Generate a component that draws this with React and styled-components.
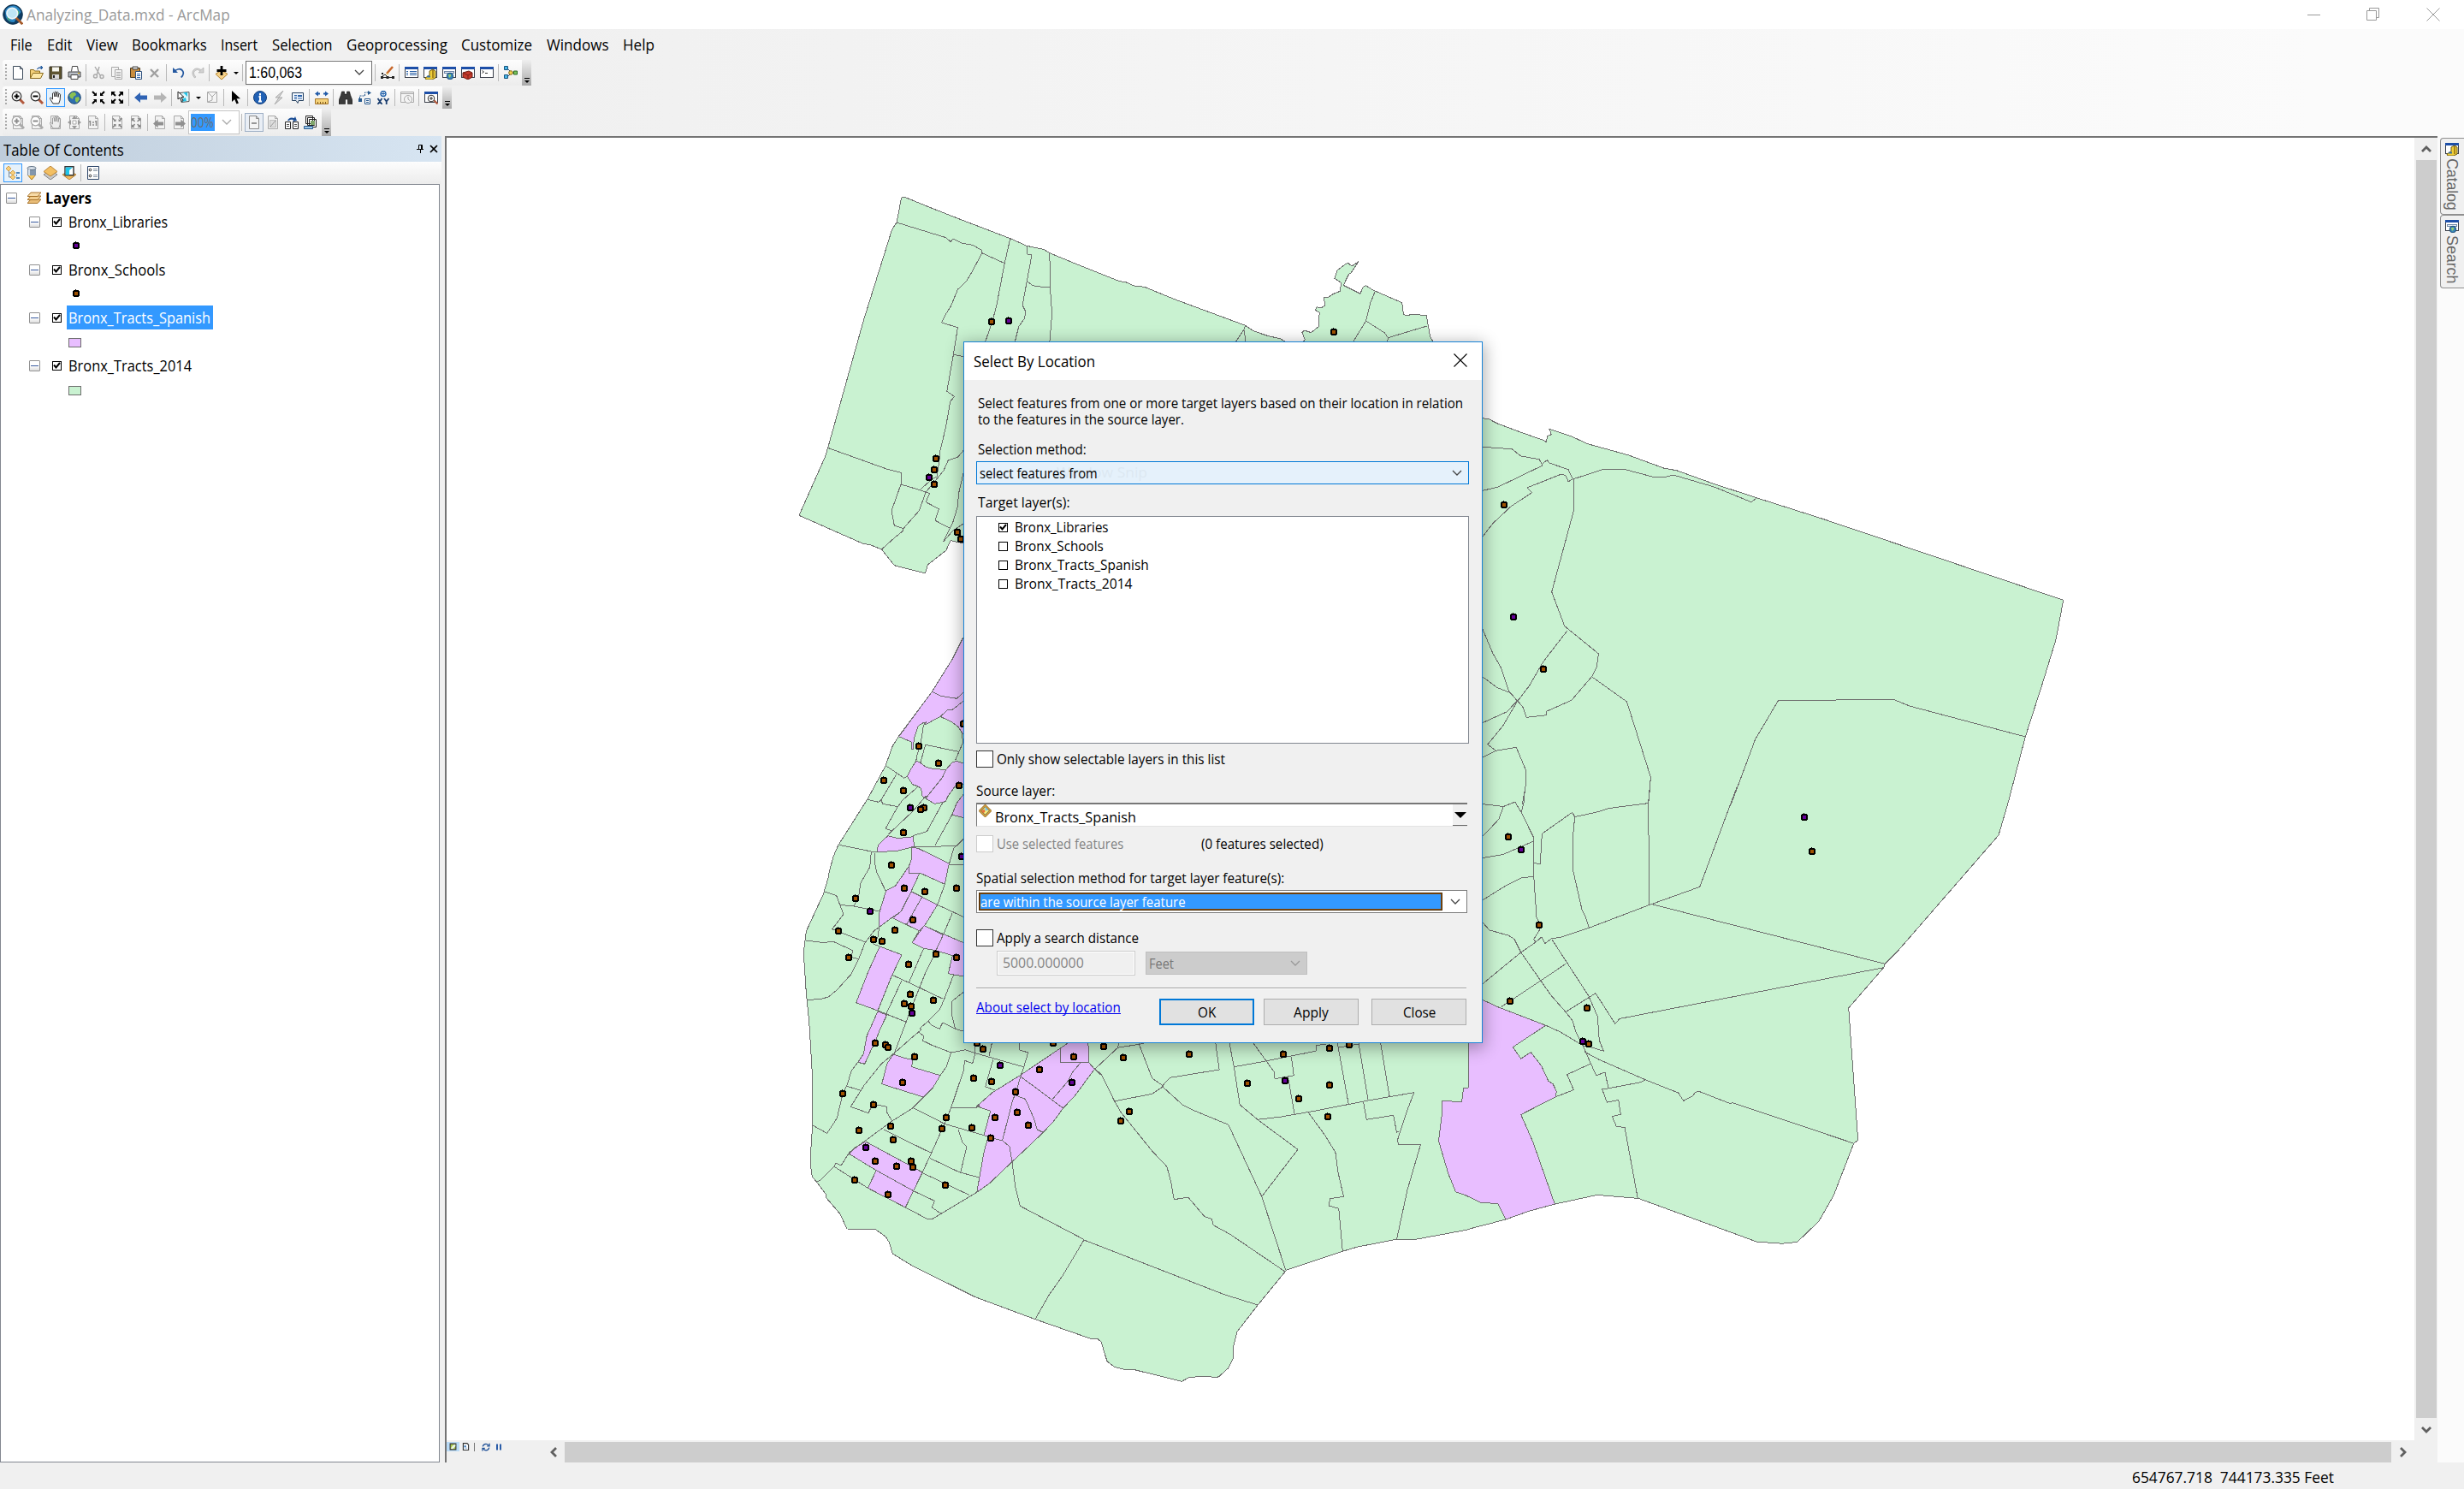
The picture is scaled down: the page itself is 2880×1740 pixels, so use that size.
import React, { useLayoutEffect, useRef, useState } from "react";
import styled, { createGlobalStyle, css } from "styled-components";

const GlobalStyle = createGlobalStyle`
  * { box-sizing: border-box; }
  body { margin: 0; background: #fff; overflow: hidden; }
`;

const UI = `"Open Sans", "Noto Sans", sans-serif`;
const ARIAL = `"Liberation Sans", Arial, sans-serif`;

/* ---------- text fitted to the metrics of the native control ---------- */

const FitBox = styled.span`
  display: block;
  flex: none;
  width: ${(p) => p.$w}px;
  height: ${(p) => p.$lh}px;
  line-height: ${(p) => p.$lh}px;
  font-family: ${(p) => (p.$arial ? ARIAL : UI)};
  font-size: ${(p) => p.$size}px;
  font-weight: ${(p) => (p.$bold ? 700 : 400)};
  color: ${(p) => p.$color};
  white-space: pre;
`;
const FitInner = styled.span`
  display: inline-block;
  transform-origin: 0 50%;
`;

function Fit({ w, size = 16, lh = 20, color = "#000", bold, arial, children }) {
  const ref = useRef(null);
  const [k, setK] = useState(1);
  useLayoutEffect(() => {
    if (ref.current) setK(w / ref.current.offsetWidth);
  }, [w, children]);
  return (
    <FitBox $w={w} $size={size} $lh={lh} $color={color} $bold={bold} $arial={arial}>
      <FitInner ref={ref} style={{ transform: `scaleX(${k})` }}>
        {children}
      </FitInner>
    </FitBox>
  );
}

/* ---------- icons, all drawn on a 16 x 16 grid ---------- */

const G = "#a9a9a9";
const page = (c = "#3c4a5a", f = "#fff") => (
  <path d="M2.5 .5h8l3 3v12h-11zM10.5 .5v3h3" fill={f} stroke={c} />
);
const windowFrame = (
  <>
    <rect x=".5" y="1.5" width="15" height="12" fill="#fff" stroke="#3a3f4a" />
    <rect x="0" y="1" width="16" height="3" fill="#1d4fa8" />
  </>
);
const inArrows = (c) => (
  <g fill={c} stroke={c}>
    <path d="M1 1l4 4M15 1l-4 4M1 15l4-4M15 15l-4-4" strokeWidth="2" />
    <path d="M6 2v4H2zM10 2v4h4zM6 14v-4H2zM10 14v-4h4z" stroke="none" />
  </g>
);
const outArrows = (c) => (
  <g fill={c} stroke={c}>
    <path d="M2 2l4 4M14 2l-4 4M2 14l4-4M14 14l-4-4" strokeWidth="2" />
    <path d="M1 1h5l-5 5zM15 1h-5l5 5zM1 15h5l-5-5zM15 15h-5l5-5z" stroke="none" />
  </g>
);
const hand = (c, f = "#fff") => (
  <path
    d="M5 15L1.5 9.5Q1 8 2.5 8.2L4.5 10V3q1-1.6 1.8 0l.6 4V1.8q1-1.6 1.8 0V7l.6-5q1.2-1.2 1.8.3L11 7.5l.8-3.6q1.3-1 1.8.5l-.5 6.6-1.4 4z"
    fill={f}
    stroke={c}
  />
);
const magnifier = (sign, c, rim, handle) => (
  <>
    <path d="M10 10l5 5" stroke={handle} strokeWidth="3" />
    <circle cx="6.5" cy="6.5" r="5.3" fill="#fff" stroke={rim} strokeWidth="1.2" />
    <path d={sign === "+" ? "M3.5 6.5h6M6.5 3.5v6" : "M3.5 6.5h6"} stroke={c} strokeWidth="2" />
  </>
);
const globe = (
  <>
    <circle cx="8" cy="8" r="7.3" fill="#2f6fae" stroke="#1d456f" />
    <path d="M5 2l4 0 1 3-3 2-1 3-3-2-1-3zM9 8l4-1 1 3-3 4-2-2z" fill="#8cc152" />
  </>
);
const bigArrow = (c, left) => (
  <path d={left ? "M0 8l7-6v3.5h8v5H7V14z" : "M16 8l-7-6v3.5H1v5h8V14z"} fill={c} />
);

const ICONS = {
  new: page(),
  open: (
    <>
      <path d="M.5 14.5v-10h4l1 1.5h6v8z" fill="#f5d27a" stroke="#8a6a1c" />
      <path d="M.5 14.5l3-6h12l-3 6z" fill="#fde9a8" stroke="#8a6a1c" />
      <path d="M8 4q2-3 5-2M13 0v4l2-2z" fill="#2d62a3" stroke="#2d62a3" />
    </>
  ),
  save: (
    <>
      <path d="M1 1h14v14H1z" fill="#5e5530" stroke="#2d2a20" />
      <path d="M4 1.500h8v5H4z" fill="#f7f7f0" />
      <path d="M4 10h8v5H4z" fill="#d8d8d8" />
      <path d="M5 11h2v3H5z" fill="#222" />
    </>
  ),
  print: (
    <>
      <path d="M4.500 6.500l1-6h6l1 6" fill="#fff" stroke="#444" />
      <path d="M1 7h14v6H1z" fill="#b9bec6" stroke="#444" />
      <path d="M4 10.500h8v5H4z" fill="#fff" stroke="#444" />
      <path d="M12 8.500h2" stroke="#e6b800" />
    </>
  ),
  cut: (
    <g fill="none" stroke={G} strokeWidth="1.4">
      <path d="M4 1l6 10M9 1L6 11" />
      <circle cx="4.500" cy="12" r="2" />
      <circle cx="12" cy="12.500" r="2" />
    </g>
  ),
  copy: (
    <g fill="#f4f4f4" stroke={G}>
      <path d="M1.500 1.500h8v11h-8z" />
      <path d="M5.500 4.500h8v11h-8zM7 7.500h5M7 9.500h5M7 11.500h5M7 13.500h5" />
    </g>
  ),
  paste: (
    <>
      <path d="M1.500 2.500h11v11h-11z" fill="#c98d3f" stroke="#4b3a20" />
      <path d="M4 1h6v3H4z" fill="#ddd" stroke="#444" />
      <path d="M7.500 6.500h7v9h-7z" fill="#fff" stroke="#2c4f7c" />
      <path d="M9 9.500h4M9 11.500h4M9 13.500h4" stroke="#2c62a8" />
    </>
  ),
  del: <path d="M3 4l9 9M12 4l-9 9" stroke="#a0a0a0" strokeWidth="2.400" />,
  undo: <path d="M1 2v6h6L4.800 5.800Q9 3 11.500 6T10 13l1.500 1Q16 9 13 5T4 4.500z" fill="#2458a0" />,
  redo: <path d="M15 2v6H9l2.200-2.200Q7 3 4.500 6T6 13l-1.500 1Q0 9 3 5T12 4.500z" fill="#d2d2d2" stroke={G} strokeWidth=".6" />,
  addData: (
    <>
      <path d="M8 16L1 9.500 8 5l7 4.500z" fill="#f6d28a" stroke="#b5832c" />
      <path d="M8 0v11M2.500 5.500h11" stroke="#000" strokeWidth="2.800" />
    </>
  ),
  editor: (
    <>
      <path d="M1.500 13.500h13M2 12l3-2 3 3" stroke="#222" fill="none" />
      <path d="M0 12h3v3H0zM6.500 12h3v3h-3zM13 12h3v3h-3zM1 8h2v2H1z" fill="#222" />
      <path d="M7 9l7-8" stroke="#c8672a" strokeWidth="2.600" />
      <path d="M6 11l2-3 1.500 1.500z" fill="#f2cf6b" />
    </>
  ),
  toc: (
    <>
      {windowFrame}
      <path d="M2 6.500h2M2 8.500h2M2 10.500h2M6 6.500h8M6 8.500h8M6 10.500h8" stroke="#2c62a8" />
    </>
  ),
  catalog: (
    <>
      {windowFrame}
      <path d="M7 6l4-2 3 2v8l-4 2H3l-1-2 5-3z" fill="#f0cf3a" stroke="#6d5a10" />
      <path d="M11 5v9" stroke="#a8861a" strokeWidth="2" />
      <path d="M4 12.500h4" stroke="#3a6f9e" strokeWidth="2" />
    </>
  ),
  search: (
    <>
      {windowFrame}
      <rect x="2.500" y="6.500" width="11" height="2" fill="#e8eef6" stroke="#6f88a8" />
      <circle cx="9" cy="12" r="3.800" fill="#3a86b8" stroke="#1d4f7a" />
      <path d="M7 10l3 0 0 2-2 2z" fill="#9bd06a" />
    </>
  ),
  toolbox: (
    <>
      {windowFrame}
      <path d="M2 8l7-2 4 2v5l-5 3-6-3z" fill="#c4392b" stroke="#6e1a12" />
      <path d="M2 8l6 3 5-3M8 11v5" stroke="#7e1f16" fill="none" />
    </>
  ),
  python: (
    <>
      {windowFrame}
      <path d="M2.500 5.500l2 1.500-2 1.500M6 8.500h3" stroke="#333" fill="none" />
    </>
  ),
  model: (
    <>
      <path d="M4 3l5 5-5 5M9 8h3" stroke="#2b4f7a" fill="none" />
      <path d="M.5 .5h4v4h-4zM.5 10.500h4v4h-4z" fill="#49b4e8" stroke="#16557c" />
      <circle cx="8" cy="8" r="2.300" fill="#f6d34c" stroke="#85681a" />
      <path d="M11.500 6h4v4h-4z" fill="#7cc35c" stroke="#2c6b25" />
    </>
  ),
  zoomIn: magnifier("+", "#000", "#333", "#b2593d"),
  zoomOut: magnifier("-", "#000", "#333", "#b2593d"),
  pan: hand("#333"),
  globe,
  fixIn: inArrows("#000"),
  fixOut: outArrows("#000"),
  back: bigArrow("#2f63b4", true),
  fwd: bigArrow("#b5b5b5", false),
  selectFeat: (
    <>
      <path d="M3 2.500l11-1v11l-9 1z" fill="#dff6fa" stroke="#555" />
      <path d="M7 2l5 5V2zM5 10l5-2 1 4-6 1z" fill="#27c3e6" />
      <path d="M1 1v9l2.300-2 2 4.500 1.700-.8-2-4.200h3z" fill="#fff" stroke="#222" />
    </>
  ),
  clearSel: <path d="M2.500 1.500h11v12h-11zM3 2l5 5M13 2L8 7v4M3 13l5-2" fill="#f4f4f4" stroke={G} />,
  pointer: <path d="M3 0v13l3.200-3 2.300 5.500 2.400-1-2.300-5.300H13z" fill="#000" />,
  identify: (
    <>
      <circle cx="8" cy="8" r="7.500" fill="#2161b5" stroke="#133e7a" />
      <path d="M8 3v2.400M6.500 7H8v5M6 12.500h4" stroke="#fff" strokeWidth="2" fill="none" />
    </>
  ),
  bolt: <path d="M13 0L4 8h4l-5 8 9-8H8z" fill="#d8d8d8" stroke={G} />,
  popup: (
    <>
      <path d="M1.500 2.500h13v9H9l-1 3-2-3H1.500z" fill="#eef4fb" stroke="#27415f" />
      <path d="M4 5.500h3M4 7.500h3M4 9.500h3" stroke="#2c62a8" />
      <path d="M8 5h5v2H8zM8 8.500h5v1H8z" fill="#2c62a8" />
    </>
  ),
  measure: (
    <>
      <path d="M0 3.500l4-3v2h2v2H4v2zM16 3.500l-4-3v2h-2v2h2v2z" fill="#215aa8" />
      <path d="M.5 9.500h15v6H.5z" fill="#f5d27a" stroke="#a5762a" />
      <path d="M3.500 13v2M6.500 13v2M9.500 13v2M12.500 13v2" stroke="#7a5519" />
    </>
  ),
  find: (
    <path
      d="M3.500 1h3v3h3V1h3l1 4 2.500 6.500v4h-5.500V10h-3v5.500H0v-4L2.500 5z"
      fill="#3a3a3a"
      stroke="#111"
      strokeWidth=".6"
    />
  ),
  route: (
    <>
      <path d="M8.500 9.500h6v6h-6zM10 11.500h3M10 13.500h3" fill="#fff" stroke="#27598e" />
      <path d="M2.500 9V6h6V2h4" stroke="#27598e" fill="none" strokeDasharray="2 1" />
      <path d="M12 0l4 2.500L12 5zM1 9h4v4H1z" fill="#27598e" />
    </>
  ),
  gotoXY: (
    <>
      <circle cx="8" cy="3.500" r="3" fill="#fff" stroke="#1f5fa8" strokeWidth="1.400" />
      <path d="M8 1.500v4M6 3.500h4" stroke="#1f5fa8" />
      <path d="M1.500 9l5 7M6.500 9l-5 7M9 9l2.700 3.500L14.500 9M11.700 12v4" stroke="#1c3f70" strokeWidth="1.800" fill="none" />
    </>
  ),
  time: (
    <g fill="#f4f4f4" stroke={G}>
      <path d="M.5 1.500h15v12H.5zM.5 3.500h15" />
      <circle cx="9" cy="10" r="4.500" />
      <path d="M9 7v3l2 1.500" />
    </g>
  ),
  viewer: (
    <>
      {windowFrame}
      <path d="M11 11l4.500 4.500" stroke="#b2593d" strokeWidth="2.200" />
      <circle cx="8" cy="9" r="3.800" fill="#fff" stroke="#333" />
      <path d="M6 9h4M8 7v4" stroke="#333" />
    </>
  ),
  lZoomIn: (
    <>
      {page(G, "#f2f2f2")}
      {magnifier("+", "#8c8c8c", G, G)}
    </>
  ),
  lZoomOut: (
    <>
      {page(G, "#f2f2f2")}
      {magnifier("-", "#8c8c8c", G, G)}
    </>
  ),
  lPan: (
    <>
      {page(G, "#f2f2f2")}
      {hand("#999", "#ededed")}
    </>
  ),
  lFull: (
    <>
      {page(G, "#f2f2f2")}
      <path d="M8 0l3 4H5zM8 16l3-4H5zM0 8l4-3v6zM16 8l-4-3v6z" fill="#9a9a9a" />
      <path d="M6 6h4v4H6z" fill="#fff" stroke={G} />
    </>
  ),
  l11: (
    <>
      {page(G, "#f2f2f2")}
      <path d="M4.500 6v6M11.500 6v6M8 7v2M8 10v2M3 7h2M10 7h2" stroke="#8c8c8c" strokeWidth="1.500" />
    </>
  ),
  lIn: (
    <>
      {page(G, "#f2f2f2")}
      <g transform="translate(2 2.500) scale(.76)">{inArrows("#858585")}</g>
    </>
  ),
  lOut: (
    <>
      {page(G, "#f2f2f2")}
      <g transform="translate(2 2.500) scale(.76)">{outArrows("#858585")}</g>
    </>
  ),
  lBack: (
    <>
      {page(G, "#f2f2f2")}
      <g transform="translate(0 3) scale(.8)">{bigArrow("#909090", true)}</g>
    </>
  ),
  lFwd: (
    <>
      {page(G, "#f2f2f2")}
      <g transform="translate(3.200 3) scale(.8)">{bigArrow("#909090", false)}</g>
    </>
  ),
  draft: (
    <>
      {page("#8c8c8c", "#f4f4f4")}
      <path d="M5 9h6" stroke="#777" strokeWidth="1.500" />
    </>
  ),
  focus: (
    <>
      {page(G, "#f2f2f2")}
      <path d="M4.500 5.500h7v8h-7z" fill="#ddd" stroke="#999" strokeDasharray="1 1" />
      <path d="M5 13l6-7" stroke="#999" />
    </>
  ),
  layout: (
    <>
      <path d="M.5 7.500h6v8h-6zM9.500 7.500h6v8h-6z" fill="#fff" stroke="#222" />
      <path d="M2 10.500h3M2 12.500h3M11 10.500h3M11 12.500h3" stroke="#555" />
      <path d="M3 6Q5 1 11 3l1-2 2 5-5 1 1-2Q6 4 5 6z" fill="#1c4f96" />
    </>
  ),
  driven: (
    <>
      <path d="M2.500 .5h8v9h-8zM4.500 2.500h8v9h-8zM6.500 4.500h8v9h-8z" fill="#fff" stroke="#222" />
      <path d="M8 6h5v5H8z" fill="#7fa46a" />
      <path d="M.5 12.500h10v3H.5z" fill="#9cc7e8" stroke="#27598e" />
    </>
  ),
  listOrder: (
    <>
      <path d="M3.500 3v10h4M3.500 8h4" stroke="#7d8b98" fill="none" />
      <path d="M3 0l3 3-3 3-3-3zM8 5l3 3-3 3-3-3zM8 10l3 3-3 3-3-3z" fill="#f7cf7c" stroke="#c99238" strokeWidth=".8" />
      <path d="M12 8h4M12 14h4M12 11h1" stroke="#1f64a8" strokeWidth="1.600" />
    </>
  ),
  listSource: (
    <>
      <path d="M3 10h10l-5 6z" fill="#f7c65a" stroke="#a87a24" />
      <path d="M3 2h10v9H3z" fill="#8296ac" />
      <ellipse cx="8" cy="2.500" rx="5" ry="2" fill="#dbe3ec" stroke="#5d6f82" />
      <path d="M5 4v7" stroke="#d3dde8" strokeWidth="2" />
    </>
  ),
  listVis: (
    <>
      <path d="M8 16L0 10l8-5 8 5z" fill="#c9c9c9" stroke="#808080" />
      <path d="M8 12L0 6.500 8 0l8 6.500z" fill="#f3bf62" stroke="#b8843a" />
    </>
  ),
  listSel: (
    <>
      <path d="M0 10l8 6 8-6-4-2H4z" fill="#f3b95a" stroke="#b8843a" />
      <path d="M3 .8h10v10H3z" fill="#fff" stroke="#333" strokeWidth="1.400" />
      <path d="M3.700 1.500H12L8 5v5.500H3.700z" fill="#1fc6ea" />
    </>
  ),
  options: (
    <>
      <path d="M1.500 .5h13v15h-13z" fill="#fff" stroke="#2b4468" />
      <path d="M8 3.500h5M8 5.500h5M8 10.500h5M8 12.500h5" stroke="#8a96a5" />
      <circle cx="4.500" cy="4.500" r="1.300" fill="none" stroke="#222" />
      <circle cx="4.500" cy="11.500" r="1.300" fill="none" stroke="#222" />
    </>
  ),
  layers: (
    <>
      <path d="M0 14.500l4-4.500h12l-4 4.500z" fill="#e9bd78" stroke="#a8732a" />
      <path d="M0 10.500L4 6h12l-4 4.500z" fill="#f2cd8e" stroke="#a8732a" />
      <path d="M0 6.500L4 2h12l-4 4.500z" fill="#f7dba8" stroke="#a8732a" />
    </>
  ),
  polygonLayer: (
    <>
      <path d="M8 0l8 8-8 8-8-8z" fill="#d9a23c" stroke="#8a6420" />
      <path d="M8 3l5 5-5 5-5-5z" fill="#f5ee7c" stroke="#444" strokeWidth=".8" />
      <path d="M8 3l4 4-4 1z" fill="#78c4f0" />
      <path d="M3 8l4-2 1 3-2 2z" fill="#e8703a" />
    </>
  ),
  arcmap: (
    <>
      <circle cx="8" cy="8" r="7.600" fill="#0f3d63" stroke="#0a2a44" strokeWidth=".5" />
      <path d="M2 5q2-4 7-4 4 1 5.500 5L12 9 9 14q-5 0-6.500-4z" fill="#2a86c4" />
      <path d="M10 3l3 3-1 3-2 1zM3 10l2 1 1 3z" fill="#4fae58" />
      <path d="M10 10l5.500 5.500" stroke="#a55a2a" strokeWidth="1.800" />
      <circle cx="7.500" cy="7" r="4.200" fill="#bfe6f5" stroke="#eef5f8" strokeWidth="1.100" />
    </>
  ),
  dataView: (
    <>
      <path d="M2 2h12v12H2z" fill="#a9c94a" stroke="#333" strokeWidth="2" />
      <path d="M3 12l5-7 5-2v4l-5 6z" fill="#e7f3e2" />
    </>
  ),
  layoutView: (
    <>
      <path d="M2.500 1h8l3 3v11h-11z" fill="#fff" stroke="#333" strokeWidth="2" />
      <path d="M5 6h3v3H5zM5 11h6" fill="#3a78b8" stroke="#3a78b8" />
    </>
  ),
  refresh: (
    <path d="M2 7q1-5 6-5 3 0 4.500 2.500M14 9q-1 5-6 5-3 0-4.500-2.500M14.500 1v5H10M1.500 15v-5H6" stroke="#1d4f96" strokeWidth="2" fill="none" />
  ),
  pause: <path d="M2 1h4v14H2zM10 1h4v14h-4z" fill="#2a5ca8" />,
};

const IconSvg = styled.svg`
  display: block;
  flex: none;
`;
const Icon = ({ name, size = 16 }) => (
  <IconSvg width={size} height={size} viewBox="0 0 16 16" fill="none">
    {ICONS[name]}
  </IconSvg>
);
const Chevron = ({ color = "#444", w = 12 }) => (
  <IconSvg width={w} height={w / 2 + 2} viewBox="0 0 12 8">
    <path d="M1 1l5 5 5-5" fill="none" stroke={color} strokeWidth="1.300" />
  </IconSvg>
);

/* ---------- window shell ---------- */

const Window = styled.div`
  position: relative;
  width: 2880px;
  height: 1740px;
  display: flex;
  flex-direction: column;
  background: linear-gradient(90deg, #f0f0f0 0, #f0f0f0 600px, #fbfbfb 2700px);
  overflow: hidden;
`;
const TitleBar = styled.header`
  height: 34px;
  flex: none;
  display: flex;
  align-items: center;
  background: #fff;
  padding: 0 28px 0 3px;
  gap: 4px;
`;
const WindowButtons = styled.div`
  margin-left: auto;
  padding-bottom: 1px;
  display: flex;
  gap: 54px;
  align-items: center;
`;
const MenuBar = styled.nav`
  height: 36px;
  flex: none;
  display: flex;
  align-items: center;
  gap: 16.500px;
  padding: 0 0 0 12px;
`;
const ToolbarStack = styled.div`
  height: 89px;
  flex: none;
  display: flex;
  flex-direction: column;
  align-items: flex-start;
`;
const Toolbar = styled.div`
  margin-left: 3px;
  margin-bottom: ${(p) => p.$mb ?? 0}px;
  height: ${(p) => p.$h}px;
  display: flex;
  align-items: center;
  background: linear-gradient(#fdfdfd, #ececec);
  border-radius: 3px;
`;
const Grip = styled.div`
  width: 2px;
  height: 20px;
  margin: 0 2px 0 3px;
  background: repeating-linear-gradient(#a8a8a8 0 2px, transparent 2px 4px);
`;
const ToolButton = styled.div`
  width: 22px;
  height: 22px;
  flex: none;
  display: flex;
  align-items: center;
  justify-content: center;
  ${(p) =>
    p.$on &&
    css`
      background: ${p.$on === "grey" ? "#e9eef5" : "#e5f1fb"};
      border: 1px solid ${p.$on === "grey" ? "#9fb0c6" : "#3399ff"};
    `}
`;
const Sep = styled.div`
  width: 1px;
  height: 20px;
  flex: none;
  margin: 0 3px 0 2px;
  background: #b9b9b9;
`;
const Caret = styled.div`
  width: 11px;
  display: flex;
  justify-content: center;
  &::after {
    content: "";
    border: 3px solid transparent;
    border-top: 3px solid #000;
    border-bottom: 0;
  }
`;
const ScaleCombo = styled.div`
  width: 148px;
  height: 28px;
  display: flex;
  align-items: center;
  justify-content: space-between;
  padding: 0 8px 0 3px;
  margin: 0 1px 0 0;
  background: #fff;
  border: 1px solid #707070;
`;
const PercentCombo = styled.div`
  width: 60px;
  height: 28px;
  display: flex;
  align-items: center;
  justify-content: space-between;
  padding: 0 8px 0 2px;
  background: #fff;
  border: 1px solid #c6c6c6;
`;
const PercentValue = styled.div`
  width: 28px;
  height: 20px;
  display: flex;
  background: #3399ff;
`;
const Overflow = styled.div`
  align-self: stretch;
  width: 11px;
  margin-left: 2px;
  padding-bottom: 3px;
  display: flex;
  flex-direction: column;
  align-items: center;
  justify-content: flex-end;
  gap: 2px;
  background: linear-gradient(#efefef, #a9a9a9);
  &::before {
    content: "";
    width: 6px;
    height: 1px;
    background: #000;
  }
  &::after {
    content: "";
    border: 3px solid transparent;
    border-top: 3px solid #000;
    border-bottom: 0;
  }
`;

const Workspace = styled.main`
  height: 1550px;
  flex: none;
  display: flex;
`;
const Toc = styled.aside`
  width: 516px;
  display: flex;
  flex-direction: column;
  background: #f0f0f0;
`;
const TocTitle = styled.div`
  height: 30px;
  flex: none;
  display: flex;
  align-items: center;
  padding: 2px 4px 0 4px;
  background: linear-gradient(90deg, #bfcddb, #d7e5f2);
`;
const TocTitleIcons = styled.div`
  margin-left: auto;
  margin-top: -3px;
  display: flex;
  gap: 6px;
  align-items: center;
`;
const TocTools = styled.div`
  height: 26px;
  flex: none;
  display: flex;
  align-items: center;
  padding-left: 4px;
  background: linear-gradient(#fdfdfd, #ececec);
`;
const Tree = styled.div`
  width: 514px;
  flex: 1;
  background: #fff;
  border: 1px solid #828790;
  padding-top: 1px;
`;
const TreeRow = styled.div`
  height: 28px;
  display: flex;
  align-items: center;
  padding-left: ${(p) => p.$in}px;
`;
const Expander = styled.div`
  width: 13px;
  height: 13px;
  flex: none;
  border: 1px solid #919191;
  border-radius: 1px;
  background: linear-gradient(#fff 50%, #dedede);
  display: flex;
  align-items: center;
  justify-content: center;
  margin-right: ${(p) => p.$gap}px;
  &::after {
    content: "";
    width: 9px;
    height: 1px;
    background: #3a5ba0;
  }
`;
const SmallCheck = styled.div`
  width: 11px;
  height: 11px;
  flex: none;
  border: 1px solid #000;
  background: #fff;
  display: flex;
  align-items: center;
  justify-content: center;
`;
const TreeLabel = styled.div`
  height: 28px;
  display: flex;
  align-items: center;
  margin-left: ${(p) => p.$ml}px;
  padding: 0 3px 0 2px;
  background: ${(p) => (p.$on ? "#3399ff" : "transparent")};
`;
const Swatch = styled.div`
  width: 15px;
  height: 11px;
  margin-top: 2px;
  background: ${(p) => p.$c};
  border: 1px solid #6e6e6e;
`;

const MapFrame = styled.section`
  width: 2329px;
  margin-left: 4px;
  display: grid;
  grid-template-columns: 2300px 2px 24px 1px;
  grid-template-rows: 1522px 2px 24px;
  border-left: 2px solid #747474;
  border-top: 2px solid #747474;
  background: #f0f0f0;
`;
const MapCanvas = styled.div`
  background: #fff;
`;
const MapSvg = styled.svg`
  display: block;
`;
const VScroll = styled.div`
  grid-column: 3;
  grid-row: 1 / 3;
  display: flex;
  flex-direction: column;
  align-items: center;
  background: #f0f0f0;
`;
const VThumb = styled.div`
  flex: 1;
  width: 24px;
  background: #cdcdcd;
`;
const Arrow = styled.div`
  flex: none;
  width: ${(p) => p.$w}px;
  height: ${(p) => p.$h}px;
  display: flex;
  align-items: center;
  justify-content: center;
`;
const BottomStrip = styled.div`
  grid-column: 1;
  grid-row: 3;
  display: flex;
`;
const ViewButtons = styled.div`
  width: 112px;
  height: 11px;
  display: flex;
  align-items: center;
`;
const ViewButton = styled.div`
  width: 15px;
  height: 11px;
  display: flex;
  align-items: center;
  justify-content: center;
  background: ${(p) => (p.$on ? "#b9dbf7" : "transparent")};
`;
const ViewSep = styled.div`
  width: 1px;
  height: 10px;
  background: #777;
  margin: 0 5px 0 2px;
`;
const HThumb = styled.div`
  flex: 1;
  background: #cdcdcd;
`;
const SideTabs = styled.div`
  margin-left: auto;
  width: 28px;
  padding-top: 2px;
  display: flex;
  flex-direction: column;
`;
const SideTab = styled.div`
  height: ${(p) => p.$h}px;
  border: 1px solid #8f8f8f;
  border-right: 0;
  border-radius: 4px 0 0 4px;
  background: #f0f0f0;
  padding: 4px 0 0 5px;
  display: flex;
  flex-direction: column;
  gap: 3px;
`;
const VerticalText = styled.div`
  writing-mode: vertical-rl;
  width: 18px;
  line-height: 18px;
  font: 18px ${ARIAL};
  letter-spacing: ${(p) => p.$ls}px;
  color: #666;
`;
const StatusBar = styled.footer`
  flex: 1;
  background: #f0f0f0;
  display: flex;
  align-items: center;
  justify-content: flex-end;
  padding: 3px 152px 0 0;
`;

/* ---------- map ---------- */

/* A sheet turns digitised coordinates into map units. */
const sheet = (ox, oy, sx, sy) => (s) =>
  s
    .trim()
    .split(/\s+/)
    .map((p) => {
      const [x, y] = p.split(",").map(Number);
      return [ox + x / sx, oy + y / sy];
    });
const nw = sheet(900, 200, 1.8233, 3);
const w = sheet(900, 700, 3, 3);
const sw = sheet(900, 1080, 3, 3);
const s = sheet(1140, 1190, 2.6133, 3);
const ne = sheet(1700, 440, 2.1189, 3);
const se = sheet(1700, 920, 3, 2.8);
const abs = sheet(0, 0, 1, 1);

const toPoints = (pts) => pts.map(([x, y]) => `${x.toFixed(1)},${y.toFixed(1)}`).join(" ");

const LAND = [
  ...nw("280,93 287,91 345,130 410,172 512,236 547,262 583,274 596,287 655,327 745,386 758,389 776,402 798,406 862,449 1013,541 1030,560 1062,578 1087,587 1098,598 1100,640 1140,640 1137,598 1140,590 1134,565 1139,558 1153,566 1169,545 1171,496 1162,487 1165,476 1174,480 1183,471 1180,441 1191,441 1201,430 1215,421 1217,391 1203,376 1209,347 1231,321 1240,333 1254,317 1238,357 1234,360 1222,400 1258,430 1263,408 1270,401 1285,417 1347,461 1350,502 1355,506 1371,502 1399,506 1403,545 1407,580 1413,598"),
  ...ne("70,146 85,149 107,165 165,196 222,224 228,230 230,209 240,203 235,184 248,190 290,210 330,236 430,275 520,322 550,329 640,375 750,426 910,498 1130,603 1508,784 1490,920 1460,1060 1414,1263 1370,1500"),
  ...abs("2336,976"),
  ...se("1560,530 1510,578 1505,590 1382,722 1415,1155 1400,1165 1330,1335 1278,1420 1202,1488 1148,1493 1060,1487 645,1345 500,1334 352,1364 260,1387 180,1414 60,1443"),
  ...s("1500,742 1345,775 1285,775 1165,802 1122,817 950,883 863,1005 800,1098 787,1155 787,1192 772,1227 745,1255 735,1260 710,1255 655,1258 630,1273 490,1233 455,1231 425,1222 403,1203 395,1175 385,1135 372,1122 350,1122 183,1055 0,977"),
  ...sw("500,1198 470,1180 430,1155 418,1115 405,1095 370,1070 320,1069 270,1068 245,1015 198,960 195,945 165,905 148,885 143,850 143,795 149,705 148,520 137,340 127,240 119,120 119,90 127,25"),
  ...w("187,1035 205,975 207,960 222,903 240,862 343,700 405,585 430,515 452,480 568,325 640,210 678,135 700,100"),
  ...nw("440,1310 412,1305 405,1302 385,1295 375,1330 336,1380 331,1410 265,1382 238,1326 215,1311 197,1305 62,1207 118,1000 125,960 200,520 260,205 270,180"),
];

const SPANISH_TRACTS = [
  w("690,110 640,210 568,325 452,482 497,502 497,526 502,526 505,490 520,445 540,432 545,440 597,412 635,430 660,448 674,470 690,480"),
  w("512,568 525,572 545,588 575,596 617,598 640,572 655,568 690,580 690,645 650,655 625,690 615,710 577,718 547,700 533,690 530,665 520,657 500,650 481,622 495,595"),
  w("690,670 655,715 638,757 690,769"),
  w("413,830 445,838 485,836 503,832 505,868 450,882 374,888 380,862"),
  w("497,870 522,875 628,928 613,1000 525,960 487,962 487,937 497,910"),
  w("487,937 487,962 525,960 495,1025 460,1095 430,1115 383,1150 383,1100 407,1022 440,1005"),
  w("495,1025 587,1072 542,1145 523,1163 430,1118 460,1095"),
  sw("540,5 690,70 690,185 625,173 640,110 582,92 540,85 498,65"),
  sw("385,78 462,107 425,185 378,303 302,275 345,165"),
  sw("378,306 410,318 385,370 368,415 355,440 332,490 308,484 328,455 340,390"),
  sw("432,456 475,470 500,475 497,500 597,530 570,575 538,606 392,560 410,490"),
  sw("335,762 535,870 475,993 343,925 373,863 277,805 300,782"),
  sw("725,638 780,590 880,528 1043,418 1043,400 1115,400 1118,485 1138,508 1070,600 1028,645 995,690 958,730 895,790 850,832 770,908 725,940 735,885 750,800 765,745 750,740 773,655"),
  [
    ...s("1506,60 1506,243 1491,245 1486,292 1425,290 1425,340 1415,430 1445,545 1467,608"),
    ...se("35,1333 90,1358 153,1363 180,1414 260,1387 352,1364 275,1160 233,1071 355,1013 358,995 345,970 330,962 305,912 268,867 233,888 205,850 320,779 155,720 90,692 50,780"),
  ],
];

const BOUNDARIES = [
  ...[
    "270,180 375,233 385,248 390,237 410,253 432,259 452,278 452,287 500,323",
    "452,287 427,363 418,387 400,415 385,475 375,500 366,531 400,548 391,643 377,772 393,790 384,808 375,895 362,985 362,1000 356,1070 345,1080 320,1117",
    "391,643 413,650",
    "512,236 500,323 483,470 474,525 459,598",
    "547,262 547,290 558,294 538,470 544,490 543,515 530,545 522,598",
    "549,388 560,401 580,406 597,406",
    "596,287 597,406 601,500 596,598",
    "1013,541 1010,555 1014,598",
    "1010,555 993,598",
    "1290,420 1280,460 1270,525 1243,598",
    "1270,525 1310,567 1317,584 1400,543",
    "1317,584 1316,598",
    "123,970 250,1045 280,1057 279,1098 320,1118 340,1130 332,1160 360,1184 352,1225 382,1250",
    "279,1098 259,1190 265,1242 284,1253 284,1260 262,1290 238,1326",
    "332,1125 318,1190 284,1253",
    "413,978 400,1003 380,1013 370,1050 350,1090 332,1125",
    "413,1053 402,1130 400,1175 390,1230 370,1298 390,1260 413,1235",
  ].map(nw),
  ...[
    "568,325 600,340 655,349 680,325",
    "597,412 622,390 640,388 680,356",
    "674,470 676,505 650,565",
    "550,428 538,445 528,510 516,545 512,568",
    "528,572 545,511 660,535",
    "617,598 605,625 545,700",
    "407,585 430,600 470,628 481,622",
    "443,615 410,670 385,712",
    "343,703 380,712 390,705 395,718 448,728",
    "520,657 465,705 448,728 405,805 425,812",
    "547,690 500,745 415,825",
    "605,715 550,815 500,830",
    "638,757 578,865",
    "243,862 355,885 374,888 450,882 497,870 578,868 655,865 680,840",
    "655,865 645,872 628,930 680,932",
    "533,1045 478,1142",
    "613,1000 587,1072 680,1115",
    "640,1100 607,1178 582,1232",
    "542,1145 607,1178",
    "368,890 367,925 375,960 405,1022",
    "355,888 350,940 318,995 310,1050 293,1077",
    "190,1025 233,1040 245,1072 258,1105 218,1157 335,1203",
    "245,1072 293,1077 383,1095",
    "383,1150 365,1163 335,1203",
    "383,1150 377,1190",
  ].map(w),
  ...[
    "127,57 190,65 220,60 290,92 285,115 310,122",
    "335,60 310,125 285,175 235,230 205,255 175,263 130,265",
    "360,68 385,78",
    "523,23 498,65",
    "428,178 487,205 607,262",
    "538,87 487,205",
    "462,197 405,320",
    "582,95 545,170 497,290 435,455",
    "645,175 610,265 595,300 555,340 525,365 530,370 495,400 432,455 390,490 330,565 283,640 345,662 360,630 410,640 410,660 428,690",
    "378,303 478,343",
    "555,340 567,355 595,367 605,345 650,367 680,376",
    "680,237 638,270 638,320 650,367",
    "520,378 540,392 535,408 570,425 635,450 685,440 720,452 888,500",
    "635,450 618,500 597,530",
    "538,606 500,645 428,690 330,762 278,800 250,845 230,838 225,850 180,895 165,903",
    "308,484 285,515 270,565 255,595 235,680 200,733 150,705",
    "270,568 318,583",
    "503,645 560,673 612,700 750,740",
    "635,643 612,700 560,815 503,935",
    "398,720 565,802",
    "560,820 665,870 735,888",
    "660,720 675,765 690,780 668,870",
    "535,872 620,912 700,950",
    "373,863 503,935 577,970 568,993 600,1015",
    "225,850 343,925 475,993 555,1035 570,1033 600,1015 725,940",
    "720,452 710,488 683,478 678,515 635,643 720,645 735,635",
    "782,475 755,570 790,582",
    "720,418 718,452",
    "778,418 768,462",
    "873,418 873,440 905,450 890,500 880,530",
    "1018,435 1018,485 1118,485",
    "1088,487 1060,520 1045,550 992,612",
    "880,535 1028,645",
    "862,600 895,613 903,630 925,680 937,720 958,730",
    "880,530 862,590 850,620 815,758",
    "767,748 815,758 840,780 850,840 860,920 877,988 1100,1105",
    "1138,505 1165,530",
    "1293,418 1340,540 1380,568",
    "1210,620 1340,595 1380,568",
  ].map(sw),
  ...[
    "332,777 760,968 863,1005",
    "332,777 265,905 225,970 183,1055",
    "365,178 388,203 425,290 445,330 540,465 585,520 597,570 607,635 650,627 700,695 722,703 727,725 778,757 945,887",
    "595,208 745,180 733,80",
    "440,80 435,103 365,178",
    "435,103 515,88",
    "570,238 635,305 665,322 773,373 875,625 948,883",
    "595,208 570,238",
    "875,625 985,460 862,355 808,303 790,170 775,80",
    "790,170 887,150 1040,115 1040,95 1072,90",
    "845,80 912,187 915,212 973,200 965,135",
    "955,205 975,335",
    "862,355 935,345 1035,325 1200,288 1340,260 1320,320 1290,425 1292,442 1360,443 1320,600 1287,775",
    "1295,395 1287,400 1277,340 1195,355 1185,290",
    "1017,330 1068,410 1100,470 1108,540 1125,625 1083,632 1080,657 1110,667 1122,817",
    "1105,80 1140,300",
    "1170,80 1200,288",
    "1237,80 1265,273",
    "1107,103 1170,90",
  ].map(s),
  ...[
    "60,246 142,254 165,279 210,290 218,312 107,388 75,398 60,404",
    "218,305 230,293 235,303 282,326 293,360 282,368 276,348 265,342 180,390 192,407 140,455 95,515 60,580",
    "293,360 370,325 420,325 492,352 522,352 542,345 645,388 735,440 748,426",
    "296,360 296,467 241,755 273,875 357,972 352,1020 340,1052 290,1135 228,1174 228,1187 178,1195 170,1160 155,1135 135,1105 115,1020 95,970 65,870",
    "280,890 220,1000 185,1085 155,1140 120,1225 82,1290 103,1312 153,1300 177,1380 177,1430 168,1500",
    "65,1048 105,1090 140,1110 155,1137 130,1175 65,1217",
    "103,1312 65,1339",
    "340,1052 427,1140 486,1405 480,1500",
    "685,1500 745,1272 802,1136 945,1135 945,1132 1087,1132 1127,1155 1414,1263",
  ].map(ne),
  ...[
    "90,54 172,63 212,48 233,80 278,165 278,290 288,425 300,450 298,468 278,497 285,507 305,490 318,511 342,494 370,492 472,460 683,385 860,326 990,0",
    "172,63 155,105 120,140 90,167",
    "90,232 170,220 278,176",
    "278,247 301,252 307,152 413,82 422,97 415,165 415,268 447,400 460,425 472,460",
    "422,97 505,80 540,69 680,52",
    "686,0 680,52 683,385",
    "695,383 870,425 1510,578",
    "90,374 175,325 235,296 280,292",
    "90,432 122,467 190,485 210,497 233,540 338,680 390,735 415,765 425,800 450,845 497,943 528,932 540,985",
    "90,650 233,540 285,507",
    "342,498 470,682 502,750 508,828 523,863 485,852 450,845",
    "390,735 495,674 563,773 580,757 1505,590",
    "165,718 302,633 390,578",
    "320,779 370,800 450,845",
    "455,865 505,890 670,957 785,1000 803,1026 835,1010 845,998 858,995 940,1025 967,1035 975,1032 1400,1165",
    "540,985 655,965 670,957",
    "476,905 395,940 418,990 355,1013",
    "540,985 518,988 535,1031 575,1023 583,1070 553,1077 568,1110 597,1113 643,1345",
    "248,0 243,50 235,80",
  ].map(se),
];

const SCHOOLS = [
  ...nw("472,527 353,1007 350,1046 350,1097 1201,563 399,1265 406,1289"),
  ...w("522,516 591,576 399,636 468,672 663,654 540,732 528,738 468,819 678,437 426,933 471,1014 543,1026 654,1014 300,1050 240,1164 501,1125 438,1161 363,1194 393,1200 276,1257 582,1245 654,1257"),
  ...sw("486,141 493,246 573,267 471,279 495,288 369,417 405,424 414,432 507,465 465,555 255,594 363,633 423,708 312,723 432,756 369,831 444,849 495,831 501,852 297,897 414,948 615,915 618,678 603,717 708,714 714,540 726,417 747,438 777,552 861,588 789,678 774,750 867,660 906,705 945,510 1065,465 993,418 1170,429 1239,468 1260,657 1230,690"),
  ...s("653,126 940,126 1083,105 1142,93 830,228 1081,234 988,282 1076,345"),
  ...ne("123,450 220,1025"),
  ...se("189,162 297,451 195,700 465,723 471,840 1254,210"),
];
const LIBRARIES = [
  ...nw("508,524 339,1074"),
  ...w("492,732 351,1095 672,903"),
  ...sw("498,312 807,495 1059,555 336,783"),
  ...s("946,219"),
  ...ne("146,843"),
  ...se("234,204 450,832 1227,98"),
];

const Dot = ({ x, y, fill }) => (
  <g transform={`translate(${Math.round(x)} ${Math.round(y)})`}>
    <path d="M-1 -5h1v1h3v1h1v6h-1v1h-6v-1h-1v-6h1v-1h2z" fill="#000" />
    <rect x="-2" y="-2" width="4" height="4" fill={fill} />
  </g>
);

const BROWN = "#a05000";
const VIOLET = "#660099";

const MapView = () => (
  <MapCanvas>
    <MapSvg width="2300" height="1522" viewBox="522 161 2300 1522" shapeRendering="crispEdges">
      <g stroke="#6e6e6e" strokeWidth="1" strokeLinejoin="round">
        <polygon points={toPoints(LAND)} fill="#c9f2d1" />
        {SPANISH_TRACTS.map((t, i) => (
          <polygon key={i} points={toPoints(t)} fill="#e8beff" />
        ))}
        {BOUNDARIES.map((b, i) => (
          <polyline key={i} points={toPoints(b)} fill="none" />
        ))}
      </g>
      {SCHOOLS.map(([x, y], i) => (
        <Dot key={i} x={x} y={y} fill={BROWN} />
      ))}
      {LIBRARIES.map(([x, y], i) => (
        <Dot key={i} x={x} y={y} fill={VIOLET} />
      ))}
    </MapSvg>
  </MapCanvas>
);

/* ---------- dialog ---------- */

const Dialog = styled.div`
  position: absolute;
  left: 1126px;
  top: 399px;
  width: 607px;
  height: 820px;
  display: flex;
  flex-direction: column;
  background: #f0f0f0;
  border: 1px solid #1883d7;
  box-shadow: 0 4px 18px 2px rgba(0, 0, 0, 0.32);
`;
const DialogTitle = styled.div`
  height: 44px;
  flex: none;
  display: flex;
  align-items: center;
  justify-content: space-between;
  padding: 0 17px 0 11px;
  background: #fff;
`;
const DialogBody = styled.div`
  flex: 1;
  display: flex;
  flex-direction: column;
  padding: 17px 15px 0 14px;
`;
const Line = styled.div`
  display: flex;
  align-items: center;
  flex: none;
  height: ${(p) => p.$h ?? 20}px;
  margin-top: ${(p) => p.$mt ?? 0}px;
  padding-left: ${(p) => p.$pl ?? 0}px;
`;
const Combo = styled.div`
  position: relative;
  flex: none;
  width: ${(p) => p.$w}px;
  height: ${(p) => p.$h ?? 27}px;
  margin-top: ${(p) => p.$mt ?? 0}px;
  margin-left: ${(p) => p.$ml ?? 0}px;
  padding: 0 ${(p) => p.$pr ?? 7}px 0 ${(p) => p.$pl ?? 3}px;
  display: flex;
  align-items: center;
  justify-content: space-between;
  background: ${(p) => p.$bg};
  border: 1px solid ${(p) => p.$bc};
`;
const Ghost = styled.div`
  position: absolute;
  left: 93px;
  top: 2px;
  opacity: 0.035;
`;
const LayerList = styled.div`
  width: 576px;
  height: 266px;
  flex: none;
  margin-top: 6px;
  background: #fff;
  border: 1px solid #828790;
  padding-top: 1px;
`;
const LayerItem = styled.div`
  height: 22px;
  display: flex;
  align-items: center;
  gap: 8px;
  padding-left: 25px;
`;
const Checkbox = styled.div`
  width: 20px;
  height: 20px;
  flex: none;
  margin-right: 4px;
  background: #fff;
  border: 1px solid ${(p) => (p.$off ? "#cccccc" : "#333")};
`;
const SourceCombo = styled.div`
  width: 574px;
  height: 28px;
  flex: none;
  margin-top: 4px;
  display: flex;
  background: #fff;
  border-top: 2px solid #777;
  border-left: 1px solid #777;
  border-bottom: 1px solid #e3e3e3;
  padding-left: 2px;
`;
const SourceIcon = styled.div`
  margin-right: 4px;
`;
const SourceButton = styled.div`
  width: 17px;
  margin-left: auto;
  background: #f0f0f0;
  border-bottom: 1px solid #696969;
  display: flex;
  align-items: center;
  justify-content: center;
  &::after {
    content: "";
    border: 7px solid transparent;
    border-top: 7px solid #000;
    border-bottom: 0;
  }
`;
const Chosen = styled.div`
  width: 542px;
  height: 21px;
  display: flex;
  align-items: center;
  padding-left: 1px;
  background: #3399ff;
  border: 1px solid #4a2c08;
  box-shadow: inset 0 0 0 1px #8a4d0c;
`;
const DistanceField = styled.div`
  width: 162px;
  height: 29px;
  display: flex;
  align-items: center;
  padding: 0 0 2px 6px;
  border: 1px solid #cccccc;
  box-shadow: inset 0 0 0 1px #fff;
`;
const Rule = styled.div`
  width: 573px;
  height: 2px;
  flex: none;
  margin-top: 14px;
  background: #a0a0a0;
  border-bottom: 1px solid #fff;
`;
const Footer = styled.div`
  display: flex;
  margin-top: 11px;
  height: 32px;
`;
const LinkBox = styled.div`
  width: 169px;
  height: 18px;
  border-bottom: 1px solid #0000ee;
`;
const Button = styled.div`
  width: 111px;
  height: 31px;
  margin-left: ${(p) => p.$ml}px;
  padding-top: 1px;
  display: flex;
  align-items: center;
  justify-content: center;
  background: #e1e1e1;
  border: ${(p) => (p.$primary ? "2px solid #0078d7" : "1px solid #adadad")};
`;

const Tick = () => (
  <IconSvg width="9" height="9" viewBox="0 0 9 9">
    <path d="M1 3.500l2.500 3 4.500-5.500" fill="none" stroke="#000" strokeWidth="2" />
  </IconSvg>
);

const SelectByLocation = () => (
  <Dialog>
    <DialogTitle>
      <Fit w={142} size={17.5} lh={24}>Select By Location</Fit>
      <IconSvg width="16" height="18" viewBox="0 0 16 18">
        <path d="M.5 .5l15 15M15.500 .5l-15 15" stroke="#000" strokeWidth="1.100" />
      </IconSvg>
    </DialogTitle>
    <DialogBody>
      <Line $h={19} $pl={2}><Fit w={567}>Select features from one or more target layers based on their location in relation</Fit></Line>
      <Line $h={19} $pl={2}><Fit w={241}>to the features in the source layer.</Fit></Line>
      <Line $mt={16} $pl={2}><Fit w={127}>Selection method:</Fit></Line>
      <Combo $w={576} $h={27} $mt={4} $bg="#e5f1fb" $bc="#0078d7">
        <Ghost><Fit w={106} size={17}>Window Snip</Fit></Ghost>
        <Fit w={138}>select features from</Fit>
        <Chevron />
      </Combo>
      <Line $mt={11} $pl={2}><Fit w={108}>Target layer(s):</Fit></Line>
      <LayerList>
        {[["Bronx_Libraries", 110, true], ["Bronx_Schools", 104], ["Bronx_Tracts_Spanish", 157], ["Bronx_Tracts_2014", 138]].map(
          ([name, width, on]) => (
            <LayerItem key={name}>
              <SmallCheck>{on && <Tick />}</SmallCheck>
              <Fit w={width}>{name}</Fit>
            </LayerItem>
          )
        )}
      </LayerList>
      <Line $mt={8}><Checkbox /><Fit w={267}>Only show selectable layers in this list</Fit></Line>
      <Line $mt={17}><Fit w={92}>Source layer:</Fit></Line>
      <SourceCombo>
        <SourceIcon><Icon name="polygonLayer" size={15} /></SourceIcon>
        <Fit w={165} size={17} lh={30}>Bronx_Tracts_Spanish</Fit>
        <SourceButton />
      </SourceCombo>
      <Line $mt={10}>
        <Checkbox $off />
        <Fit w={148} color="#838383">Use selected features</Fit>
        <Line $pl={91}><Fit w={143}>(0 features selected)</Fit></Line>
      </Line>
      <Line $mt={20}><Fit w={360}>Spatial selection method for target layer feature(s):</Fit></Line>
      <Combo $w={574} $h={27} $mt={4} $bg="#fff" $bc="#7a7a7a" $pl={2}>
        <Chosen><Fit w={240} color="#fff">are within the source layer feature</Fit></Chosen>
        <Chevron />
      </Combo>
      <Line $mt={19}><Checkbox /><Fit w={166}>Apply a search distance</Fit></Line>
      <Line $h={29} $mt={5} $pl={24}>
        <DistanceField><Fit w={95} color="#838383">5000.000000</Fit></DistanceField>
        <Combo $w={189} $h={27} $ml={12} $bg="#cccccc" $bc="#bfbfbf"><Fit w={29} color="#777">Feet</Fit><Chevron color="#999" /></Combo>
      </Line>
      <Rule />
      <Footer>
        <LinkBox><Fit w={169} color="#0000ee">About select by location</Fit></LinkBox>
        <Button $ml={45} $primary><Fit w={21}>OK</Fit></Button>
        <Button $ml={11}><Fit w={41}>Apply</Fit></Button>
        <Button $ml={15}><Fit w={38}>Close</Fit></Button>
      </Footer>
    </DialogBody>
  </Dialog>
);

/* ---------- assembly ---------- */

const MENUS = [["File", 26], ["Edit", 29.5], ["View", 36.5], ["Bookmarks", 88], ["Insert", 43.5], ["Selection", 70.5], ["Geoprocessing", 117.5], ["Customize", 83], ["Windows", 73], ["Help", 37]];

const Tools = ({ items }) =>
  items.map((it, i) => {
    if (it === "|") return <Sep key={i} />;
    if (it === "v") return <Caret key={i} />;
    if (typeof it !== "string") return <React.Fragment key={i}>{it}</React.Fragment>;
    const [name, on] = it.split(":");
    return (
      <ToolButton key={i} $on={on}>
        <Icon name={name} />
      </ToolButton>
    );
  });

const LAYERS = [
  { name: "Bronx_Libraries", width: 116, dot: VIOLET },
  { name: "Bronx_Schools", width: 113, dot: BROWN },
  { name: "Bronx_Tracts_Spanish", width: 166, swatch: "#e8beff", selected: true },
  { name: "Bronx_Tracts_2014", width: 144, swatch: "#c9f2d1" },
];

export default function App() {
  return (
    <Window>
      <GlobalStyle />
      <TitleBar>
        <Icon name="arcmap" size={24} />
        <Fit w={238} size={18} lh={26} color="#999">Analyzing_Data.mxd - ArcMap</Fit>
        <WindowButtons>
          <IconSvg width="15" height="16"><path d="M0 8.500h15" stroke="#999" /></IconSvg>
          <IconSvg width="16" height="16" fill="none" stroke="#999"><path d="M.5 3.500h11v11H.5zM3.500 3V.5h11v11H12" /></IconSvg>
          <IconSvg width="16" height="16"><path d="M.5 .5l15 15M15.500 .5l-15 15" stroke="#999" /></IconSvg>
        </WindowButtons>
      </TitleBar>
      <MenuBar>
        {MENUS.map(([m, width]) => (
          <Fit key={m} w={width} size={18} lh={26}>{m}</Fit>
        ))}
      </MenuBar>
      <ToolbarStack>
        <Toolbar $h={30} $mb={1}>
          <Grip />
          <Tools items={["new", "open", "save", "print", "|", "cut", "copy", "paste", "del", "|", "undo", "redo", "|", "addData", "v", "|",
            <ScaleCombo><Fit arial w={62} size={18} lh={24}>1:60,063</Fit><Chevron /></ScaleCombo>,
            "|", "editor", "|", "toc", "catalog", "search", "toolbox", "python", "|", "model"]} />
          <Overflow />
        </Toolbar>
        <Toolbar $h={26}>
          <Grip />
          <Tools items={["zoomIn", "zoomOut", "pan:blue", "globe", "|", "fixIn", "fixOut", "|", "back", "fwd", "|", "selectFeat", "v", "clearSel", "|", "pointer", "|",
            "identify", "bolt", "popup", "|", "measure", "|", "find", "route", "gotoXY", "|", "time", "|", "viewer"]} />
          <Overflow />
        </Toolbar>
        <Toolbar $h={32}>
          <Grip />
          <Tools items={["lZoomIn", "lZoomOut", "lPan", "lFull", "l11", "|", "lIn", "lOut", "|", "lBack", "lFwd",
            <PercentCombo><PercentValue><Fit w={27} size={17} color="#6d6d6d">00%</Fit></PercentValue><Chevron color="#aaa" /></PercentCombo>,
            "|", "draft:grey", "focus", "layout", "driven"]} />
          <Overflow />
        </Toolbar>
      </ToolbarStack>
      <Workspace>
        <Toc>
          <TocTitle>
            <Fit w={141} size={18} lh={26}>Table Of Contents</Fit>
            <TocTitleIcons>
              <IconSvg width="9" height="12" fill="none" stroke="#000"><path d="M2.500 6V1.500h4V6M0 6.500h8M4.500 7v4M5.500 2v4" /></IconSvg>
              <IconSvg width="10" height="10"><path d="M1 1l8 8M9 1L1 9" stroke="#000" strokeWidth="1.700" /></IconSvg>
            </TocTitleIcons>
          </TocTitle>
          <TocTools>
            <Tools items={["listOrder:blue", "listSource", "listVis", "listSel", "|", "options"]} />
          </TocTools>
          <Tree>
            <TreeRow $in={6}>
              <Expander $gap={12} />
              <Icon name="layers" />
              <TreeLabel $ml={3}><Fit w={54} size={18} lh={26} bold>Layers</Fit></TreeLabel>
            </TreeRow>
            {LAYERS.map((l) => (
              <React.Fragment key={l.name}>
                <TreeRow $in={33}>
                  <Expander $gap={14} />
                  <SmallCheck><Tick /></SmallCheck>
                  <TreeLabel $ml={6} $on={l.selected}>
                    <Fit w={l.width} size={18} lh={26} color={l.selected ? "#fff" : "#000"}>{l.name}</Fit>
                  </TreeLabel>
                </TreeRow>
                <TreeRow $in={l.dot ? 83 : 79}>
                  {l.dot ? (
                    <IconSvg width="10" height="10" shapeRendering="crispEdges"><Dot x={5} y={5} fill={l.dot} /></IconSvg>
                  ) : (
                    <Swatch $c={l.swatch} />
                  )}
                </TreeRow>
              </React.Fragment>
            ))}
          </Tree>
        </Toc>
        <MapFrame>
          <MapView />
          <VScroll>
            <Arrow $w={24} $h={26}>
              <IconSvg width="12" height="10"><path d="M1 8l5-5 5 5" fill="none" stroke="#606060" strokeWidth="2.800" /></IconSvg>
            </Arrow>
            <VThumb />
            <Arrow $w={24} $h={28}>
              <IconSvg width="12" height="10"><path d="M1 2l5 5 5-5" fill="none" stroke="#606060" strokeWidth="2.800" /></IconSvg>
            </Arrow>
          </VScroll>
          <BottomStrip>
            <ViewButtons>
              <ViewButton $on><Icon name="dataView" size={9} /></ViewButton>
              <ViewButton><Icon name="layoutView" size={9} /></ViewButton>
              <ViewSep />
              <ViewButton><Icon name="refresh" size={10} /></ViewButton>
              <ViewButton><Icon name="pause" size={8} /></ViewButton>
            </ViewButtons>
            <Arrow $w={26} $h={24}>
              <IconSvg width="10" height="12"><path d="M8 1L3 6l5 5" fill="none" stroke="#606060" strokeWidth="2.800" /></IconSvg>
            </Arrow>
            <HThumb />
            <Arrow $w={27} $h={24}>
              <IconSvg width="10" height="12"><path d="M2 1l5 5-5 5" fill="none" stroke="#606060" strokeWidth="2.800" /></IconSvg>
            </Arrow>
          </BottomStrip>
        </MapFrame>
        <SideTabs>
          <SideTab $h={90}><Icon name="catalog" /><VerticalText $ls={-0.2}>Catalog</VerticalText></SideTab>
          <SideTab $h={86}><Icon name="search" /><VerticalText $ls={-0.1}>Search</VerticalText></SideTab>
        </SideTabs>
      </Workspace>
      <StatusBar>
        <Fit w={236} size={17.5} lh={24}>654767.718  744173.335 Feet</Fit>
      </StatusBar>
      <SelectByLocation />
    </Window>
  );
}
